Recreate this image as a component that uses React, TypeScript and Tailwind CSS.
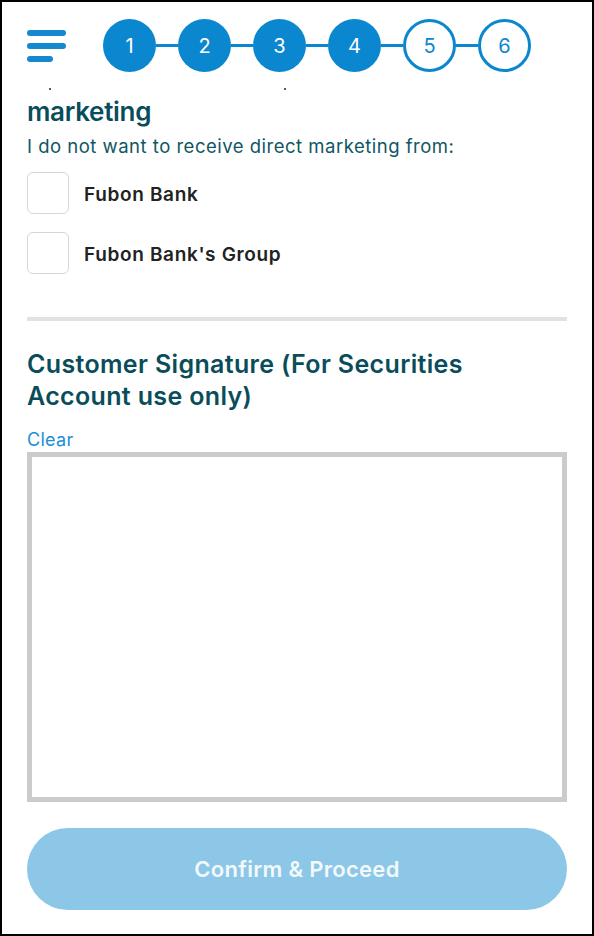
import React from "react";

const steps = [1, 2, 3, 4, 5, 6];

function Stepper() {
  return (
    <div className="flex items-center">
      {steps.map((n, i) => {
        const done = n <= 4;
        return (
          <React.Fragment key={n}>
            {i > 0 && <div className="w-[22px] h-[3px] bg-[#0b87d0]" />}
            <div
              className={
                done
                  ? "w-[53px] h-[53px] rounded-full bg-[#0b87d0] text-white flex items-center justify-center text-[20px]"
                  : "w-[53px] h-[53px] rounded-full border-[3px] border-[#0b87d0] bg-white text-[#0b87d0] flex items-center justify-center text-[20px]"
              }
            >
              {n}
            </div>
          </React.Fragment>
        );
      })}
    </div>
  );
}

function Check({ label }: { label: string }) {
  return (
    <div className="flex items-center h-[42px]">
      <div className="w-[42px] h-[42px] rounded-[6px] border-[1.5px] border-[#d6d6d6] bg-white" />
      <span className="ml-[15px] mt-[4px] text-[19px] font-semibold text-[#222222] tracking-[0.65px]">{label}</span>
    </div>
  );
}

export default function App() {
  return (
    <div
      className="w-[594px] h-[936px] border-2 border-black bg-white overflow-hidden flex flex-col px-[25px]"
      style={{ fontFamily: "Inter, 'Noto Sans', 'Liberation Sans', sans-serif" }}
    >
      <div className="mt-[17px] h-[53px] flex items-center">
        <div className="flex flex-col gap-[7px] w-[39px]">
          <div className="h-[6px] w-[39px] rounded-full bg-[#1589d0]" />
          <div className="h-[6px] w-[39px] rounded-full bg-[#1589d0]" />
          <div className="h-[6px] w-[26px] rounded-full bg-[#1589d0]" />
        </div>
        <div className="ml-[37px]">
          <Stepper />
        </div>
      </div>

      <div className="mt-[16px] h-[2px] flex">
        <div className="ml-[22px] w-[2px] h-[2px] bg-[#3a6670]" />
        <div className="ml-[233px] w-[2px] h-[2px] bg-[#3a6670]" />
      </div>

      <div className="mt-[6px] text-[26px] leading-[32px] font-semibold text-[#0a4d5a] tracking-[-0.3px]">
        marketing
      </div>
      <div className="mt-[5px] text-[18.5px] leading-[26px] text-[#0f5663] tracking-[0.5px]">
        I do not want to receive direct marketing from:
      </div>

      <div className="mt-[13px]">
        <Check label="Fubon Bank" />
      </div>
      <div className="mt-[18px]">
        <Check label="Fubon Bank's Group" />
      </div>

      <div className="mt-[43px] h-[4px] bg-[#e1e1e6]" />

      <div className="mt-[27px] text-[25px] leading-[32px] font-semibold text-[#0a4d5a] tracking-[0.35px]">
        Customer Signature (For Securities
        <br />
        Account use only)
      </div>

      <div className="mt-[16px] text-[18px] leading-[24px] text-[#1a8fd6] tracking-[0.3px]">Clear</div>

      <div className="h-[350px] border-[5px] border-[#cbcbcb] bg-white" />

      <button className="mt-[26px] h-[82px] rounded-full bg-[#8cc7e7] text-[#f2f8fb] text-[22px] font-semibold tracking-[0.3px] flex items-center justify-center">
        Confirm &amp; Proceed
      </button>
    </div>
  );
}
